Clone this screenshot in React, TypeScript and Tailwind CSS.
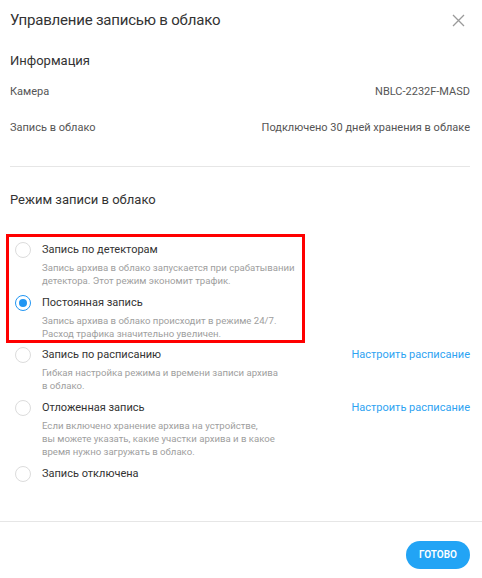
import React, { useState } from "react";

interface ModeOption {
  id: string;
  title: string;
  desc: string[];
  link?: string;
}

const modes: ModeOption[] = [
  {
    id: "detectors",
    title: "Запись по детекторам",
    desc: [
      "Запись архива в облако запускается при срабатывании",
      "детектора. Этот режим экономит трафик.",
    ],
  },
  {
    id: "constant",
    title: "Постоянная запись",
    desc: [
      "Запись архива в облако происходит в режиме 24/7.",
      "Расход трафика значительно увеличен.",
    ],
  },
  {
    id: "schedule",
    title: "Запись по расписанию",
    desc: ["Гибкая настройка режима и времени записи архива", "в облако."],
    link: "Настроить расписание",
  },
  {
    id: "delayed",
    title: "Отложенная запись",
    desc: [
      "Если включено хранение архива на устройстве,",
      "вы можете указать, какие участки архива и в какое",
      "время нужно загружать в облако.",
    ],
    link: "Настроить расписание",
  },
  { id: "off", title: "Запись отключена", desc: [] },
];

const Radio: React.FC<{ checked: boolean }> = ({ checked }) => {
  return (
    <span
      className={`flex h-4 w-4 shrink-0 items-center justify-center rounded-full bg-white ${
        checked ? "border-[1.5px] border-[#2196f3]" : "border border-[#dcdcdc]"
      }`}
    >
      {checked && <span className="h-2 w-2 rounded-full bg-[#2196f3]" />}
    </span>
  );
};

const ModeRow: React.FC<{
  mode: ModeOption;
  checked: boolean;
  onPick: () => void;
}> = ({ mode, checked, onPick }) => {
  return (
    <div className="flex items-start cursor-pointer" onClick={onPick}>
      <Radio checked={checked} />
      <div className="ml-[11px] flex-1">
        <div className="flex items-start justify-between">
          <div className="text-[11px] leading-4 text-[#333]">{mode.title}</div>
          {mode.link && (
            <a className="text-[11px] leading-4 text-[#2ea3f2]" href="#">
              {mode.link}
            </a>
          )}
        </div>
        {mode.desc.length > 0 && (
          <div className="mt-[3px] whitespace-nowrap text-[9.6px] leading-[13.3px] text-[#9e9e9e]">
            {mode.desc.map((line) => (
              <div key={line}>{line}</div>
            ))}
          </div>
        )}
      </div>
    </div>
  );
};

export default function App() {
  const [mode, setMode] = useState("constant");

  return (
    <div
      className="w-[482px] h-[578px] bg-white overflow-hidden"
      style={{ fontFamily: "Roboto, 'Noto Sans', sans-serif" }}
    >
      <div className="flex items-center justify-between pl-[10px] pr-[17px] pt-[8px]">
        <h1 className="text-[15px] leading-6 tracking-[-0.2px] text-[#333]">Управление записью в облако</h1>
        <button className="text-[#9a9a9a]">
          <svg width="13" height="13" viewBox="0 0 13 13" fill="none" stroke="currentColor" strokeWidth="1.3">
            <path d="M1 1l11 11M12 1L1 12" />
          </svg>
        </button>
      </div>

      <div className="px-[10px] pr-[12px]">
        <h2 className="mt-[19px] text-[13px] leading-5 text-[#333]">Информация</h2>
        <div className="mt-[13px] flex items-center justify-between text-[11px] leading-4 text-[#555]">
          <span>Камера</span>
          <span>NBLC-2232F-MASD</span>
        </div>
        <div className="mt-[20px] flex items-center justify-between text-[11px] leading-4 text-[#555]">
          <span>Запись в облако</span>
          <span>Подключено 30 дней хранения в облаке</span>
        </div>
        <div className="mt-[30px] h-px bg-[#e6e6e6]" />
        <h2 className="mt-[23px] text-[13px] leading-5 text-[#333]">Режим записи в облако</h2>
      </div>

      <div className="mt-[24px] flex flex-col gap-[7px] pr-[12px]">
        <div className="ml-[6px] mb-[-3px] w-[299px] border-[3px] border-[#f00] pl-[6px] pt-[5px] pr-[6px]">
          <div className="flex flex-col gap-[7px]">
            {modes.slice(0, 2).map((m) => (
              <ModeRow key={m.id} mode={m} checked={mode === m.id} onPick={() => setMode(m.id)} />
            ))}
          </div>
        </div>
        {modes.slice(2).map((m) => (
          <div key={m.id} className="pl-[15px]">
            <ModeRow mode={m} checked={mode === m.id} onPick={() => setMode(m.id)} />
          </div>
        ))}
      </div>

      <div className="mt-[39px] h-px bg-[#e6e6e6]" />
      <div className="flex justify-end pr-[12px] pt-[19px]">
        <button className="h-[28px] rounded-full bg-[#22a4f5] px-[13px] text-[10px] font-semibold uppercase text-white">
          Готово
        </button>
      </div>
    </div>
  );
}
